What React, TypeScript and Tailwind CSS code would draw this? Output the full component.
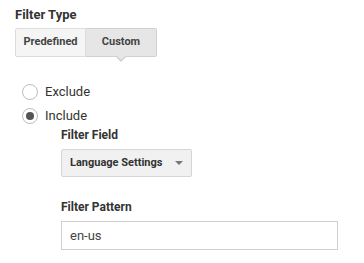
export default function App() {
  return (
    <div
      className="w-[364px] h-[263px] bg-white pl-[15px] pt-[7px] text-[#333]"
      style={{ fontFamily: "Roboto, 'Liberation Sans', sans-serif" }}
    >
      {/* Filter type */}
      <div className="text-[13px] font-bold leading-[16px]">Filter Type</div>
      <div className="mt-[5px] flex w-[142px]">
        <button className="h-[29px] w-[71px] rounded-l-[2px] border border-[#dcdcdc] bg-[#f5f5f5] text-[11px] font-bold text-[#444]">
          Predefined
        </button>
        <button className="relative h-[29px] w-[71px] rounded-r-[2px] border border-l-0 border-[#d0d0d0] bg-[#e6e6e6] text-[11px] font-bold text-[#444]">
          Custom
          <span className="absolute left-1/2 top-full -ml-[6px] h-0 w-0 border-x-[6px] border-t-[6px] border-x-transparent border-t-[#d0d0d0]" />
          <span className="absolute left-1/2 top-full -ml-[5px] -mt-[1px] h-0 w-0 border-x-[5px] border-t-[5px] border-x-transparent border-t-[#e6e6e6]" />
        </button>
      </div>

      {/* Exclude / Include */}
      <div className="mt-[26px] pl-[7px]">
        <label className="flex h-[18px] items-center gap-[7px] text-[13px] text-[#333]">
          <span className="h-[16px] w-[16px] rounded-full border border-[#bdbdbd] bg-white" />
          Exclude
        </label>
        <label className="mt-[6px] flex h-[18px] items-center gap-[7px] text-[13px] text-[#333]">
          <span className="flex h-[16px] w-[16px] items-center justify-center rounded-full border border-[#bdbdbd] bg-white">
            <span className="h-[8px] w-[8px] rounded-full bg-[#555]" />
          </span>
          Include
        </label>
      </div>

      {/* Nested fields */}
      <div className="pl-[46px]">
        <div className="mt-[2px] text-[12px] font-bold leading-[16px]">Filter Field</div>
        <div className="mt-[6px] flex h-[28px] w-[131px] items-center justify-between rounded-[2px] border border-[#d6d6d6] bg-[#f1f1f1] pl-[8px] pr-[8px]">
          <span className="text-[11px] font-bold text-[#333]">Language Settings</span>
          <span className="h-0 w-0 border-x-[4px] border-t-[4px] border-x-transparent border-t-[#777]" />
        </div>
        <div className="mt-[22px] text-[12px] font-bold leading-[16px]">Filter Pattern</div>
        <div className="mt-[6px] flex h-[29px] w-[277px] items-center border border-[#d0d0d0] bg-white pl-[8px] text-[13px] text-[#444]">
          en-us
        </div>
      </div>
    </div>
  );
}
